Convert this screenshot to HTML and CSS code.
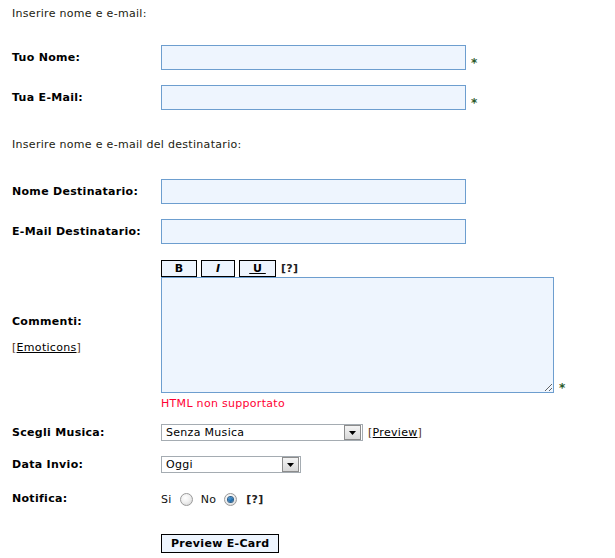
FILE: index.html
```html
<!DOCTYPE html>
<html>
<head>
<meta charset="utf-8">
<title>Invia E-Card</title>
<link rel="stylesheet" href="styles.css">
</head>
<body>
<form class="ecard-form" action="#" method="post">

	<div class="intro intro-first">Inserire nome e e-mail:</div>

	<div class="row row-first">
		<label class="lbl" for="from_name">Tuo Nome:</label>
		<div class="field">
			<input type="text" class="txt" id="from_name" name="from_name">
			<span class="req">*</span>
		</div>
	</div>

	<div class="row">
		<label class="lbl" for="from_email">Tua E-Mail:</label>
		<div class="field">
			<input type="text" class="txt" id="from_email" name="from_email">
			<span class="req">*</span>
		</div>
	</div>

	<div class="intro intro-second">Inserire nome e e-mail del destinatario:</div>

	<div class="row row-first">
		<label class="lbl" for="to_name">Nome Destinatario:</label>
		<div class="field">
			<input type="text" class="txt" id="to_name" name="to_name">
		</div>
	</div>

	<div class="row">
		<label class="lbl" for="to_email">E-Mail Destinatario:</label>
		<div class="field">
			<input type="text" class="txt" id="to_email" name="to_email">
		</div>
	</div>

	<div class="row">
		<div class="lbl lbl-comments">
			Commenti:<br><br>
			<span class="bracket">[</span><a href="#" class="lnk">Emoticons</a><span class="bracket">]</span>
		</div>
		<div class="comments">
			<div class="toolbar">
				<button type="button" class="tb-btn tb-b">B</button>
				<button type="button" class="tb-btn tb-i"><i>I</i></button>
				<button type="button" class="tb-btn tb-u"><u>&nbsp;U&nbsp;</u></button>
				<span class="help">[?]</span>
			</div>
			<div class="field">
				<textarea class="msg" name="message"></textarea>
				<span class="req req-msg">*</span>
			</div>
			<div class="note">HTML non supportato</div>
		</div>
	</div>

	<div class="row row-music">
		<div class="lbl">Scegli Musica:</div>
		<div class="inline">
			<div class="select select-music">
				<span class="select-val">Senza Musica</span>
				<span class="select-arrow"><svg width="7" height="4" viewBox="0 0 7 4"><path d="M0 0h7L3.5 4z" fill="#000"/></svg></span>
			</div>
			<span class="bracket">[</span><a href="#" class="lnk">Preview</a><span class="bracket">]</span>
		</div>
	</div>

	<div class="row">
		<div class="lbl">Data Invio:</div>
		<div class="inline">
			<div class="select select-date">
				<span class="select-val">Oggi</span>
				<span class="select-arrow"><svg width="7" height="4" viewBox="0 0 7 4"><path d="M0 0h7L3.5 4z" fill="#000"/></svg></span>
			</div>
		</div>
	</div>

	<div class="row row-notify">
		<div class="lbl lbl-notify">Notifica:</div>
		<div class="inline radios">
			<span>Si</span>
			<span class="radio"></span>
			<span>No</span>
			<span class="radio checked"></span>
			<span class="help">[?]</span>
		</div>
	</div>

	<div class="row row-submit">
		<div></div>
		<div>
			<button type="submit" class="submit">Preview E-Card</button>
		</div>
	</div>

</form>
</body>
</html>
```

FILE: styles.css
```css
body {
	margin: 0;
	padding: 7px 0 0 12px;
	background: #fff;
	font-family: "DejaVu Sans", Verdana, sans-serif;
	font-size: 11px;
	line-height: 13px;
	letter-spacing: 0.3px;
	color: #111;
}

.intro {
	color: #221;
}

.intro-second {
	margin-top: 28px;
}

.row {
	display: grid;
	grid-template-columns: 149px auto;
	align-items: center;
	margin-top: 15px;
}

.row-first {
	margin-top: 25px;
}

.intro-second + .row-first {
	margin-top: 28px;
}

.lbl {
	font-weight: bold;
	color: #000;
}

.lbl-comments .bracket,
.lbl-comments .lnk {
	font-weight: normal;
}

.field {
	display: flex;
	align-items: flex-end;
	gap: 5px;
}

.req {
	color: #2a5a2a;
	font-size: 12px;
	font-weight: bold;
	line-height: 11px;
	margin-bottom: 1px;
}

.req-msg {
	margin-bottom: -1px;
}

.txt {
	width: 305px;
	height: 25px;
	box-sizing: border-box;
	border: 1px solid #6d9ecf;
	background: #eef5fe;
	margin: 0;
	padding: 2px 4px;
	font: inherit;
}

.comments {
	display: flex;
	flex-direction: column;
}

.toolbar {
	display: flex;
	align-items: center;
	gap: 4px;
	height: 18px;
}

.tb-btn {
	height: 17px;
	box-sizing: border-box;
	border: 1px solid #000;
	background: #eef5fe;
	margin: 0;
	padding: 0;
	font-family: "DejaVu Sans", Verdana, sans-serif;
	font-size: 11px;
	font-weight: bold;
	line-height: 13px;
	color: #000;
}

.tb-b {
	width: 36px;
}

.tb-i {
	width: 34px;
}

.tb-u {
	width: 37px;
}

.help {
	margin-left: 1px;
	font-weight: bold;
	color: #222;
}

.msg {
	width: 393px;
	height: 116px;
	box-sizing: border-box;
	border: 1px solid #6d9ecf;
	background: #eef5fe;
	margin: 0;
	padding: 2px;
	font: inherit;
}

.note {
	margin-top: 4px;
	color: #ff0033;
}

.row-music {
	margin-top: 14px;
}

.inline {
	display: flex;
	align-items: center;
}

.select {
	display: flex;
	align-items: center;
	height: 17px;
	box-sizing: border-box;
	border: 1px solid #a5acb2;
	background: #fff;
	color: #000;
}

.select-music {
	width: 202px;
	margin-right: 5px;
}

.select-date {
	width: 140px;
}

.select-val {
	flex: 1;
	padding-left: 4px;
}

.select-arrow {
	display: flex;
	align-items: center;
	justify-content: center;
	width: 15px;
	height: 13px;
	margin-right: 1px;
	border: 1px solid #8c8c8c;
	background: linear-gradient(#f4f4f4, #d8d8d8);
}

.bracket {
	color: #553311;
}

.lnk {
	color: #000;
	text-decoration: underline;
}

.row-notify {
	margin-top: 20px;
	align-items: start;
}

.lbl-notify {
	margin-top: -1px;
}

.radios {
	gap: 8px;
	height: 13px;
}

.radio {
	width: 13px;
	height: 13px;
	box-sizing: border-box;
	border-radius: 50%;
	border: 1px solid #9a9a9a;
	background: radial-gradient(circle at 40% 35%, #fff 0, #f0f0f0 45%, #cfcfcf 100%);
	display: flex;
	align-items: center;
	justify-content: center;
}

.radio.checked::after {
	content: "";
	width: 5px;
	height: 5px;
	border-radius: 50%;
	background: radial-gradient(circle at 40% 35%, #4a98d8 0, #15609f 70%, #0d4f8c 100%);
	box-shadow: 0 0 0 1px #2f5f88;
}

.row-submit {
	margin-top: 28px;
}

.submit {
	height: 19px;
	box-sizing: border-box;
	border: 1px solid #000;
	background: #eef5fe;
	margin: 0;
	padding: 0 9px;
	font-family: "DejaVu Sans", Verdana, sans-serif;
	font-size: 11px;
	font-weight: bold;
	line-height: 15px;
	letter-spacing: 0.3px;
	color: #000;
}
```
